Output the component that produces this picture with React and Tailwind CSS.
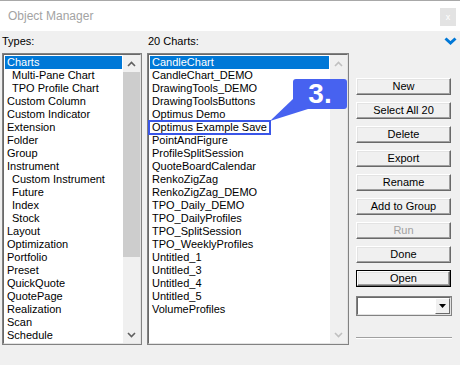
import React from "react";

const types = [
  { label: "Charts", selected: true },
  { label: "Multi-Pane Chart", indent: true },
  { label: "TPO Profile Chart", indent: true },
  { label: "Custom Column" },
  { label: "Custom Indicator" },
  { label: "Extension" },
  { label: "Folder" },
  { label: "Group" },
  { label: "Instrument" },
  { label: "Custom Instrument", indent: true },
  { label: "Future", indent: true },
  { label: "Index", indent: true },
  { label: "Stock", indent: true },
  { label: "Layout" },
  { label: "Optimization" },
  { label: "Portfolio" },
  { label: "Preset" },
  { label: "QuickQuote" },
  { label: "QuotePage" },
  { label: "Realization" },
  { label: "Scan" },
  { label: "Schedule" },
];

const charts = [
  "CandleChart",
  "CandleChart_DEMO",
  "DrawingTools_DEMO",
  "DrawingToolsButtons",
  "Optimus Demo",
  "Optimus Example Save",
  "PointAndFigure",
  "ProfileSplitSession",
  "QuoteBoardCalendar",
  "RenkoZigZag",
  "RenkoZigZag_DEMO",
  "TPO_Daily_DEMO",
  "TPO_DailyProfiles",
  "TPO_SplitSession",
  "TPO_WeeklyProfiles",
  "Untitled_1",
  "Untitled_3",
  "Untitled_4",
  "Untitled_5",
  "VolumeProfiles",
];

const buttons = ["New", "Select All 20", "Delete", "Export", "Rename", "Add to Group"];

function Arrow({ up, color }) {
  return (
    <svg width="9" height="6" viewBox="0 0 9 6">
      <path
        d={up ? "M1 5 L4.5 1.5 L8 5" : "M1 1 L4.5 4.5 L8 1"}
        fill="none"
        stroke={color}
        strokeWidth="1.6"
      />
    </svg>
  );
}

function ScrollBar({ disabled }) {
  const color = disabled ? "#c0c0c0" : "#606060";
  return (
    <div className="w-[17px] h-full bg-[#f0f0f0] flex flex-col">
      <div className="h-[17px] flex items-center justify-center">
        <Arrow up color={color} />
      </div>
      <div className="flex-1">
        {!disabled && <div className="h-[185px] bg-[#cdcdcd]" />}
      </div>
      <div className="h-[17px] flex items-center justify-center">
        <Arrow color={color} />
      </div>
    </div>
  );
}

function ListBox({ width, children, disabledScroll }) {
  return (
    <div
      className="h-[292px] border border-[#828282] bg-white"
      style={{ width }}
    >
      <div className="h-full flex border border-t-[#696969] border-l-[#696969] border-r-[#e3e3e3] border-b-[#e3e3e3]">
        <div className="flex-1 pt-[1px] overflow-hidden">{children}</div>
        <ScrollBar disabled={disabledScroll} />
      </div>
    </div>
  );
}

function Row({ label, selected, indent }) {
  return (
    <div
      className={
        "h-[13px] leading-[13px] mx-[1px] whitespace-nowrap " +
        (indent ? "pl-[7px] " : "pl-[2px] ") +
        (selected ? "bg-[#0078d7] text-white" : "text-black")
      }
    >
      {label}
    </div>
  );
}

function WinButton({ children, disabled, primary }) {
  return (
    <div
      className={
        "h-[17px] w-[95px] " + (primary ? "border border-black" : "")
      }
    >
      <div className="h-full w-full bg-[#f0f0f0] border border-t-white border-l-white border-r-[#696969] border-b-[#696969] shadow-[inset_-1px_-1px_#a0a0a0,inset_1px_1px_#e3e3e3] flex items-center justify-center leading-[13px]">
        <span className={disabled ? "text-[#a0a0a0]" : "text-black"}>{children}</span>
      </div>
    </div>
  );
}

export default function App() {
  return (
    <div className="relative w-[460px] h-[365px] bg-[#f0f0f0] overflow-hidden font-['Liberation_Sans',Arial,sans-serif] text-[11px]">
      {/* title bar */}
      <div className="h-[31px] bg-white border-t border-[#a8a8a8] flex items-center justify-between pl-[8px] pr-[4px]">
        <span className="text-[12px] text-[#a3a3a3] leading-[14px]">Object Manager</span>
        <div className="w-[16px] h-[18px] bg-[#e3e3e3] flex items-center justify-center text-white text-[9px] leading-none mt-[2px]">
          x
        </div>
      </div>

      <div className="flex pl-[2px] pt-[4px]">
        <div className="w-[140px] flex flex-col">
          <div className="h-[13px] leading-[13px] text-black mb-[5px]">Types:</div>
          <ListBox width={140}>
            {types.map((t) => (
              <Row key={t.label} {...t} />
            ))}
          </ListBox>
        </div>

        <div className="w-[202px] ml-[5px] flex flex-col">
          <div className="h-[13px] leading-[13px] text-black mb-[5px] pl-[1px]">20 Charts:</div>
          <ListBox width={202} disabledScroll>
            {charts.map((c, i) => (
              <Row key={c} label={c} selected={i === 0} />
            ))}
          </ListBox>
        </div>

        <div className="w-[104px] ml-[7px] flex flex-col">
          <div className="self-end mr-[3px] mt-[2px] h-[7px]">
            <svg width="13" height="8" viewBox="0 0 13 8">
              <path d="M1.5 1.5 L6.5 6 L11.5 1.5" fill="none" stroke="#0078d7" strokeWidth="3" />
            </svg>
          </div>
          <div className="mt-[34px] flex flex-col gap-[7px]">
            {buttons.map((b) => (
              <WinButton key={b}>{b}</WinButton>
            ))}
            <WinButton disabled>Run</WinButton>
            <WinButton>Done</WinButton>
            <WinButton primary>Open</WinButton>
          </div>
          <div className="mt-[9px] w-[96px] h-[20px] border border-[#828282] bg-white">
            <div className="h-full flex justify-end border border-t-[#696969] border-l-[#696969] border-r-[#e3e3e3] border-b-[#e3e3e3]">
              <div className="w-[15px] h-full bg-[#f0f0f0] border border-t-white border-l-white border-r-[#696969] border-b-[#696969] flex items-center justify-center">
                <svg width="7" height="4" viewBox="0 0 7 4">
                  <path d="M0 0 L7 0 L3.5 4 Z" fill="#000" />
                </svg>
              </div>
            </div>
          </div>
          <div className="mt-[21px] w-[96px] h-[2px] border-t border-[#a0a0a0] border-b border-b-white" />
        </div>
      </div>

      {/* annotation overlay */}
      <div className="absolute left-[148px] top-[120px] w-[123px] h-[15px] border-2 border-[#3a56e8]" />
      <svg className="absolute left-[266px] top-[96px]" width="44" height="28" viewBox="0 0 44 28">
        <polygon points="27,3 42,13 4,25" fill="#4762f0" />
      </svg>
      <div className="absolute left-[293px] top-[79px] w-[54px] h-[30px] rounded-[3px] bg-[#4762f0] flex items-center justify-center text-white font-bold text-[28px] leading-none">
        3.
      </div>
    </div>
  );
}
